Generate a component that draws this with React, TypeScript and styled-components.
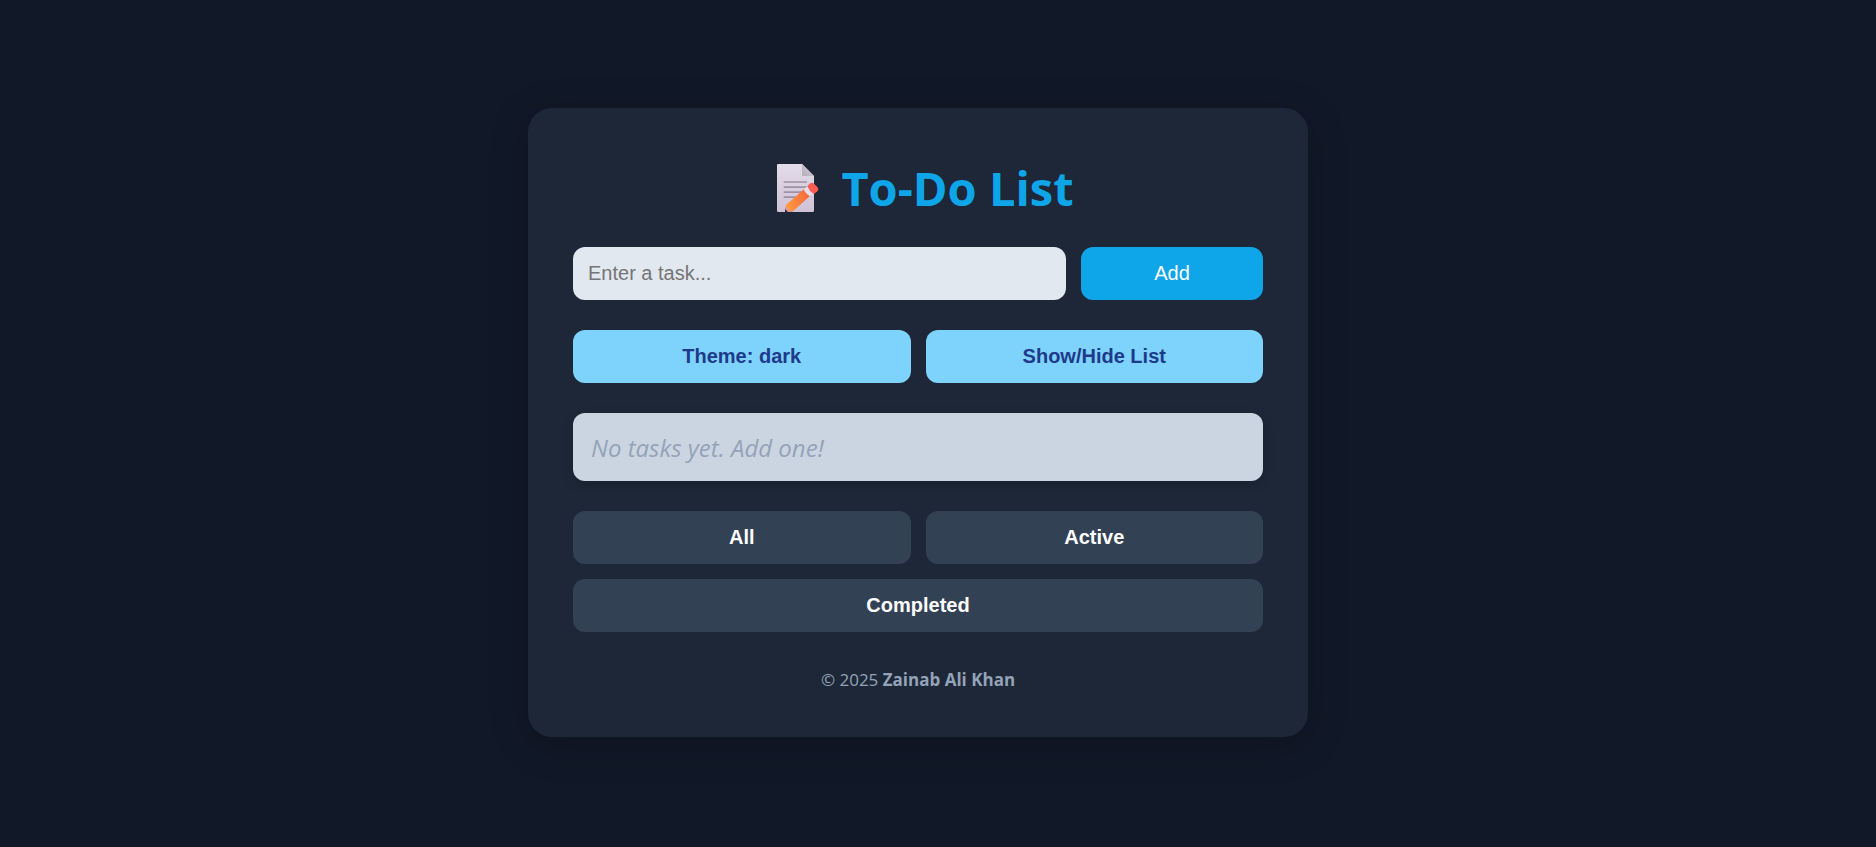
import React, { useState } from "react";
import styled, { createGlobalStyle } from "styled-components";

const GlobalStyle = createGlobalStyle`
  *, *::before, *::after { box-sizing: border-box; }
  body {
    margin: 0;
    background: #111827;
    font-family: "Segoe UI", "Open Sans", sans-serif;
  }
`;

const Page = styled.main`
  display: flex;
  justify-content: center;
  align-items: center;
  min-height: 100vh;
  padding: 40px 40px 42px 0;
`;

const Card = styled.section`
  display: flex;
  flex-direction: column;
  gap: 30px;
  width: 100%;
  max-width: 780px;
  padding: 45px;
  border-radius: 24px;
  background: #1d2737;
  box-shadow: 0 8px 40px rgba(0, 0, 0, 0.2);
`;

const Title = styled.h1`
  display: flex;
  justify-content: center;
  align-items: center;
  gap: 13px;
  margin: 0;
  padding-top: 6px;
  color: #0ea5e9;
  font-size: 47px;
  font-weight: 700;
  line-height: 58px;
`;

const Row = styled.div`
  display: flex;
  flex-wrap: wrap;
  gap: 15px;
`;

const TaskInput = styled.input`
  flex: 1 1 300px;
  min-width: 0;
  padding: 15px;
  border: 0;
  border-radius: 12px;
  background: #e2e8f0;
  color: #0f172a;
  font: 20px/23px "Liberation Sans", Arial, sans-serif;
  &::placeholder { color: #757575; }
`;

const variants = {
  primary: { bg: "#0ea5e9", fg: "#ffffff", weight: 400 },
  light: { bg: "#7dd3fc", fg: "#1e3a8a", weight: 700 },
  muted: { bg: "#334155", fg: "#ffffff", weight: 700 },
};

const Button = styled.button<{ $variant: keyof typeof variants; $basis?: string }>`
  flex: ${(p) => (p.$basis ? `0 0 ${p.$basis}` : "1 1 240px")};
  padding: 15px;
  border: 0;
  border-radius: 12px;
  background: ${(p) => variants[p.$variant].bg};
  color: ${(p) => variants[p.$variant].fg};
  font: ${(p) => variants[p.$variant].weight} 20px/23px "Liberation Sans", Arial, sans-serif;
  cursor: pointer;
`;

const TaskList = styled.ul`
  margin: 0;
  padding: 19px 18px 17px;
  border-radius: 12px;
  background: #cbd5e1;
  box-shadow: 0 4px 12px rgba(0, 0, 0, 0.15);
  color: #1e293b;
  font-size: 24px;
  line-height: 32px;
  list-style: none;
`;

const EmptyItem = styled.li`
  color: #94a3b8;
  font-style: italic;
`;

const Footer = styled.footer`
  padding-top: 6px;
  color: #94a3b8;
  font-size: 17px;
  line-height: 24px;
  text-align: center;
`;

const MemoIcon = () => (
  <svg width="66" height="48" viewBox="12 42 198 144" aria-hidden="true">
    <defs>
      <linearGradient id="paper" x1="0" y1="0" x2="0" y2="1">
        <stop offset="0" stopColor="#e3dce9" />
        <stop offset="1" stopColor="#cfc2d6" />
      </linearGradient>
      <linearGradient id="fold" x1="0" y1="1" x2="1" y2="0">
        <stop offset="0" stopColor="#b5acba" />
        <stop offset="1" stopColor="#d8d0dd" />
      </linearGradient>
      <linearGradient id="body" x1="0" y1="0.6" x2="1" y2="0.3">
        <stop offset="0" stopColor="#ff983f" />
        <stop offset="1" stopColor="#f4683c" />
      </linearGradient>
    </defs>
    <path d="M60 42H132L168 78V182Q168 186 164 186H61Q57 186 57 182V46Q57 42 60 42Z" fill="url(#paper)" />
    <path d="M132 42L168 78H136Q132 78 132 74Z" fill="url(#fold)" />
    <path d="M77 96H147M77 111.500H147M77 126.500H135M77 141.500H118" stroke="#9d92a5" strokeWidth="5" />
    <path d="M83 168L105 186H82L80 180Z" fill="#d99b91" />
    <path d="M81 177L90 186H81Z" fill="#4b2453" />
    <path d="M84 165L139 116L157 137L103 185Q93 183 91 174Q82 173 84 165Z" fill="url(#body)" />
    <path d="M137 118L149 107L169 127L156 139Q144 133 137 118Z" fill="#e5dcec" />
    <path d="M148 108L155 101Q162 96 168 101L178 111Q184 118 178 124L168 132Q154 124 148 108Z" fill="#fb5d50" />
  </svg>
);

export default function App() {
  const [task, setTask] = useState("");
  const [listShown, setListShown] = useState(true);

  return (
    <>
      <GlobalStyle />
      <Page>
        <Card>
          <Title>
            <MemoIcon />
            To-Do List
          </Title>
          <Row as="form" onSubmit={(e: React.FormEvent) => e.preventDefault()}>
            <TaskInput
              type="text"
              aria-label="Enter a task"
              placeholder="Enter a task..."
              value={task}
              onChange={(e) => setTask(e.target.value)}
            />
            <Button type="submit" $variant="primary" $basis="182px">Add</Button>
          </Row>
          <Row>
            <Button type="button" $variant="light">Theme: dark</Button>
            <Button type="button" $variant="light" onClick={() => setListShown(!listShown)}>
              Show/Hide List
            </Button>
          </Row>
          {listShown && (
            <TaskList>
              <EmptyItem>No tasks yet. Add one!</EmptyItem>
            </TaskList>
          )}
          <Row>
            <Button type="button" $variant="muted">All</Button>
            <Button type="button" $variant="muted">Active</Button>
            <Button type="button" $variant="muted">Completed</Button>
          </Row>
          <Footer>
            © 2025 <strong>Zainab Ali Khan</strong>
          </Footer>
        </Card>
      </Page>
    </>
  );
}
